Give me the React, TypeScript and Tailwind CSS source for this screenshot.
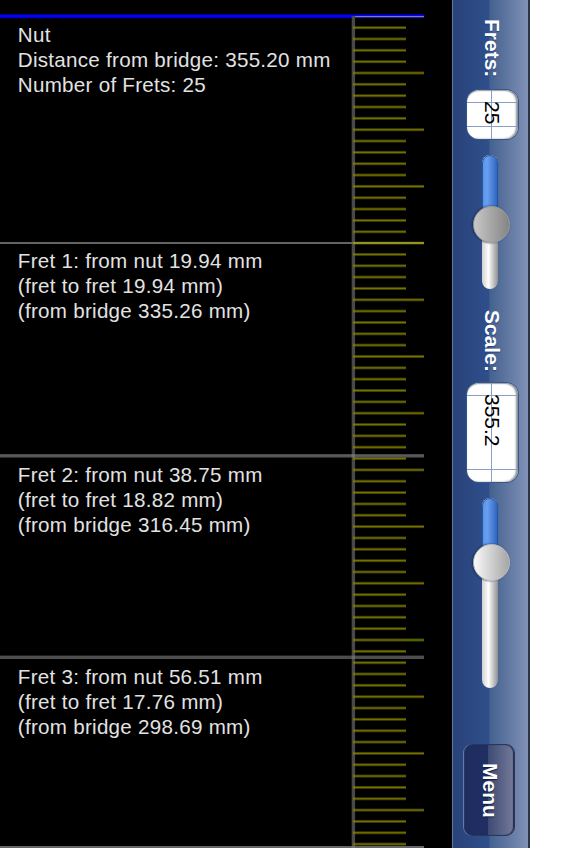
import React from "react";

const NUT_Y = 16.3;
const PX_PER_MM = 11.34;

const frets = [
  { y: 42, lines: ["Nut", "Distance from bridge: 355.20 mm", "Number of Frets: 25"] },
  { y: 268, lines: ["Fret 1: from nut 19.94 mm", "(fret to fret 19.94 mm)", "(from bridge 335.26 mm)"] },
  { y: 482, lines: ["Fret 2: from nut 38.75 mm", "(fret to fret 18.82 mm)", "(from bridge 316.45 mm)"] },
  { y: 684, lines: ["Fret 3: from nut 56.51 mm", "(fret to fret 17.76 mm)", "(from bridge 298.69 mm)"] },
];

function Fretboard() {
  const ticks = Array.from({ length: 73 }, (_, i) => i + 1);
  return (
    <svg className="block" width="452" height="848" viewBox="0 0 452 848">
      <rect x="0" y="14.2" width="424" height="4" fill="#0000a0" />
      <rect x="0" y="15" width="424" height="2.4" fill="#0000ff" />
      <rect x="353" y="16" width="71" height="1.2" fill="#807fa0" />
      <rect x="351.7" y="16" width="3.4" height="832" fill="#484848" />
      {ticks.map((mm) => {
        const y = NUT_Y + mm * PX_PER_MM;
        const end = mm % 5 === 0 ? 424 : 406;
        return (
          <g key={mm}>
            <rect x="353" y={y - 1.5} width={end - 353} height="3" fill="#858500" opacity="0.45" />
            <rect x="353" y={y - 0.6} width={end - 353} height="1.2" fill="#858500" opacity="0.75" />
          </g>
        );
      })}
      <rect x="353" y="242" width="71" height="2" fill="#929225" />
      <rect x="0" y="242" width="353" height="2" fill="#646464" />
      <rect x="0" y="454" width="424" height="3.6" fill="#808080" opacity="0.58" />
      <rect x="0" y="455.3" width="424" height="1.2" fill="#aaaaaa" opacity="0.25" />
      <rect x="0" y="655.6" width="424" height="3.4" fill="#808080" opacity="0.6" />
      <rect x="0" y="846" width="424" height="2" fill="#808080" opacity="0.8" />
      <g fill="#e2e2e2" fontFamily="'Liberation Sans', Arial, sans-serif" fontSize="20.6" letterSpacing="0.27">
        {frets.map((f) =>
          f.lines.map((line, i) => (
            <text key={line} x="17.8" y={f.y + i * 25}>
              {line}
            </text>
          )),
        )}
      </g>
    </svg>
  );
}

function Label({ text, className }: { text: string; className: string }) {
  return (
    <div
      className={`w-6 shrink-0 whitespace-nowrap text-[21px] font-bold leading-6 text-white [writing-mode:vertical-rl] [text-shadow:1px_0_1px_#24407c] ${className}`}
    >
      {text}
    </div>
  );
}

function Field({ text, className }: { text: string; className: string }) {
  return (
    <div
      className={`ml-3.5 grid w-[51px] shrink-0 grid-cols-[24px_1px_1fr] grid-rows-[12px_1px_1fr_1px_12px] overflow-hidden rounded-[12px] bg-white shadow-[0_0_0_1px_#385788,inset_-2px_0_2px_#8b8f96,inset_0_1px_1px_#a6aab0] ${className}`}
    >
      <span className="col-start-2 row-span-5 row-start-1 bg-[#8c9dc4]" />
      <span className="col-span-3 col-start-1 row-start-2 bg-[#8c9dc4]" />
      <span className="col-span-3 col-start-1 row-start-4 bg-[#8c9dc4]" />
      <span className="col-span-3 col-start-1 row-span-4 row-start-2 -mt-px ml-[13px] w-6 whitespace-nowrap text-[21px] leading-6 text-black [writing-mode:vertical-rl]">
        {text}
      </span>
    </div>
  );
}

function Slider({ className, fill, knob }: { className: string; fill: string; knob: string }) {
  return (
    <div
      className={`relative ml-[29px] w-4 shrink-0 rounded-full bg-linear-to-r from-[#d0d0d0] via-white via-40% to-[#909090] shadow-[0_0_1px_#425985] ${className}`}
    >
      <div
        className={`w-full rounded-t-full border border-[#1f56a8] bg-linear-to-r from-[#5a96ec] via-[#6a9ff0] via-30% to-[#2f66c0] ${fill}`}
      />
      <div
        className={`absolute -left-[9px] size-[37px] rounded-full border bg-linear-to-r shadow-[-1px_0_2px_#1d2d50] ${knob}`}
      />
    </div>
  );
}

export default function App() {
  return (
    <div className="flex h-[848px] w-[565px] overflow-hidden bg-white font-['Liberation_Sans',Arial,sans-serif]">
      <main className="w-[452px] shrink-0 bg-black">
        <Fretboard />
      </main>
      <aside className="flex w-[78px] shrink-0 flex-col border-r-2 border-l border-r-[#2b3448] border-l-[#657796] bg-[linear-gradient(90deg,#29427a_0%,#2f4f8b_48%,#43618f_49%,#8191b6_100%)]">
        <Label text="Frets:" className="mt-[19px] ml-[27px] h-[59px]" />
        <Field text="25" className="mt-3 h-[49px]" />
        <Slider
          className="mt-4 h-[134px]"
          fill="h-[58px]"
          knob="top-[51px] border-[#999999] from-[#c8c8c8] to-[#858585]"
        />
        <Label text="Scale:" className="mt-[21px] ml-[27px] h-[62px]" />
        <Field text="355.2" className="mt-[11px] h-[99px]" />
        <Slider
          className="mt-4 h-[190px]"
          fill="h-[58px]"
          knob="top-[46px] border-[#bcbcbc] from-[#fafafa] to-[#a6a6a6]"
        />
        <button className="mt-[56px] ml-[11px] flex h-[92px] w-[51px] shrink-0 items-center justify-center rounded-[9px] border border-[#27375d] bg-[linear-gradient(90deg,#1e2c60_0%,#202e61_47%,#3e4b75_48%,#747b98_100%)] shadow-[-1px_0_0_#647ba4,inset_-1px_0_1px_#202943]">
          <span className="whitespace-nowrap text-[21px] leading-6 font-bold text-white [text-shadow:1px_0_1px_#111a35] [writing-mode:vertical-rl]">
            Menu
          </span>
        </button>
      </aside>
    </div>
  );
}
